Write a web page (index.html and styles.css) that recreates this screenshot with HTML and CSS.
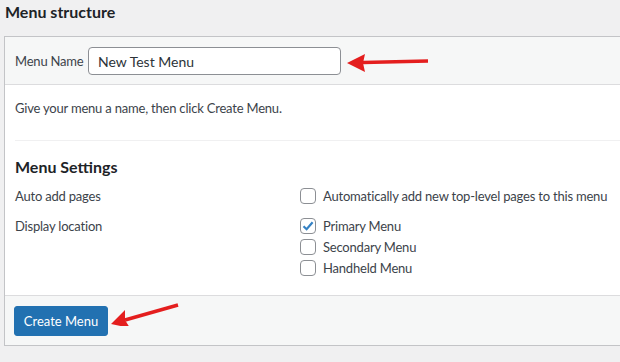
FILE: index.html
```html
<!DOCTYPE html>
<html lang="en">
<head>
  <meta charset="UTF-8">
  <title>Menu structure</title>
  <link rel="stylesheet" href="styles.css">
</head>
<body>
  <h2 class="title">Menu structure</h2>

  <div class="menu-box">
    <div class="menu-header">
      <label class="name-label" for="menu-name">Menu Name</label>
      <input class="name-input" id="menu-name" type="text" value="New Test Menu">
      <svg class="arrow arrow-name" width="90" height="24" viewBox="0 0 90 24">
        <path d="M16 11.5 L81 10" stroke="#e41e1e" stroke-width="3.5" fill="none"/>
        <polygon points="0,12 18,3 16,12 18,21" fill="#e41e1e"/>
      </svg>
    </div>

    <div class="menu-body">
      <p class="hint">Give your menu a name, then click Create Menu.</p>

      <div class="settings">
        <h3 class="settings-title">Menu Settings</h3>

        <div class="setting-row">
          <div class="setting-label">Auto add pages</div>
          <div class="setting-options">
            <label class="check"><span class="box"></span>Automatically add new top-level pages to this menu</label>
          </div>
        </div>

        <div class="setting-row">
          <div class="setting-label">Display location</div>
          <div class="setting-options">
            <label class="check"><span class="box checked">
              <svg width="14" height="14" viewBox="0 0 14 14"><path d="M2.5 7.2 L5.6 10.2 L11.6 3.2" stroke="#3582c4" stroke-width="2.2" fill="none"/></svg>
            </span>Primary Menu</label>
            <label class="check"><span class="box"></span>Secondary Menu</label>
            <label class="check"><span class="box"></span>Handheld Menu</label>
          </div>
        </div>
      </div>
    </div>

    <div class="menu-footer">
      <button class="btn-primary">Create Menu</button>
      <svg class="arrow arrow-btn" width="70" height="24" viewBox="0 0 70 24">
        <path d="M14 18 L67 3" stroke="#e41e1e" stroke-width="3.5" fill="none"/>
        <polygon points="0,22 14,8 14,18 19,26" fill="#e41e1e"/>
      </svg>
    </div>
  </div>
</body>
</html>
```

FILE: styles.css
```css
* {
  margin: 0;
  padding: 0;
  box-sizing: border-box;
}

body {
  background: #f0f0f1;
  font-family: Lato, 'Noto Sans', sans-serif;
  font-size: 13px;
  letter-spacing: -0.2px;
  color: #3c434a;
  padding-left: 4px;
}

.title {
  font-size: 16px;
  font-weight: 700;
  letter-spacing: 0;
  color: #1d2327;
  padding: 2px 0 0 1px;
  height: 36px;
}

.menu-box {
  border: 1px solid #c3c4c7;
  border-right: none;
  background: #fff;
  width: 640px;
}

.menu-header {
  position: relative;
  display: flex;
  align-items: center;
  background: #f6f7f7;
  border-bottom: 1px solid #dcdcde;
  height: 48px;
  padding: 0 10px;
}

.name-label {
  width: 73px;
}

.name-input {
  width: 253px;
  height: 28px;
  border: 1px solid #8c8f94;
  border-radius: 4px;
  padding: 0 9px;
  font-family: inherit;
  font-size: 14px;
  color: #2c3338;
  background: #fff;
  margin-top: 1px;
}

.arrow {
  position: absolute;
}

.arrow-name {
  left: 342px;
  top: 14px;
}

.menu-body {
  padding: 0 0 0 10px;
}

.hint {
  height: 56px;
  padding-top: 15px;
  border-bottom: 1px solid #f0f0f1;
}

.settings {
  padding: 16px 0 5px;
}

.settings-title {
  font-size: 16px;
  font-weight: 700;
  letter-spacing: 0;
  color: #1d2327;
  margin-bottom: 12px;
}

.setting-row {
  display: flex;
  margin-bottom: 14px;
}

.setting-label {
  width: 285px;
}

.setting-options {
  display: flex;
  flex-direction: column;
  gap: 5px;
}

.check {
  display: flex;
  align-items: center;
  height: 16px;
  color: #3c434a;
}

.box {
  display: flex;
  align-items: center;
  justify-content: center;
  width: 16px;
  height: 16px;
  border: 1px solid #8c8f94;
  border-radius: 4px;
  background: #fff;
  margin-right: 7px;
}

.menu-footer {
  position: relative;
  display: flex;
  align-items: center;
  background: #f6f7f7;
  border-top: 1px solid #dcdcde;
  height: 50px;
  padding: 0 9px;
}

.btn-primary {
  width: 94px;
  height: 30px;
  background: #2271b1;
  border: 1px solid #2271b1;
  border-radius: 3px;
  color: #fff;
  font-family: inherit;
  font-size: 13px;
}

.arrow-btn {
  left: 106px;
  top: 6px;
}
```
